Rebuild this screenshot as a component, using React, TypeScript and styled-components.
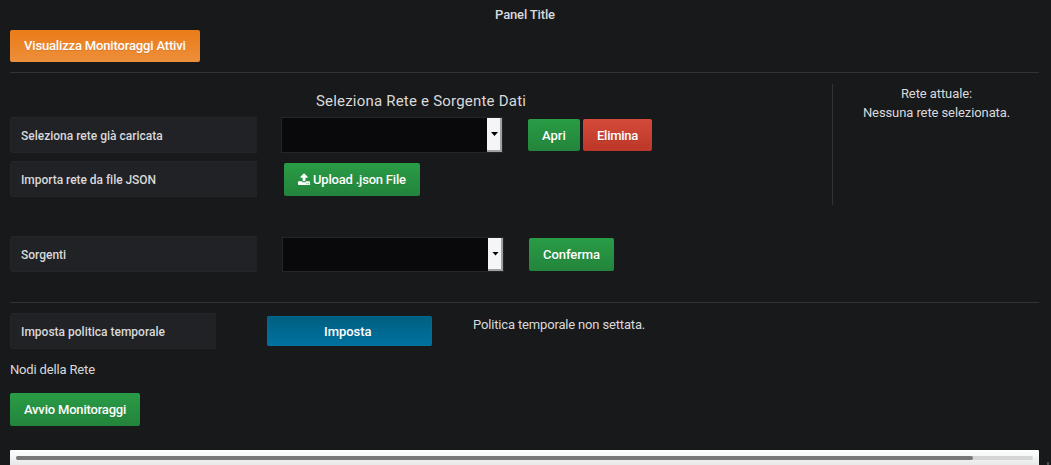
import React from 'react';
import styled, { createGlobalStyle, css } from 'styled-components';

const GlobalStyle = createGlobalStyle`
  * { box-sizing: border-box; }
  html, body { margin: 0; background: #17181a; overflow: hidden; }
  body {
    font-family: Roboto, "Liberation Sans", sans-serif;
    font-size: 13px;
    line-height: 19px;
    letter-spacing: -0.16px;
    color: #d8d9da;
  }
`;

const Panel = styled.main`
  position: relative;
  width: 1051px;
  height: 465px;
  padding: 0 12px 0 10px;
  overflow: hidden;
  display: flex;
  flex-direction: column;
  background: #18191b;
`;

const PanelTitle = styled.h1`
  margin: 0 0 0 1px;
  height: 30px;
  flex: none;
  font-size: 13px;
  font-weight: 500;
  line-height: 30px;
  text-align: center;
`;

const Divider = styled.hr`
  width: 100%;
  height: 1px;
  margin: 0;
  border: 0;
  flex: none;
  background: #333335;
`;

type Tone = 'orange' | 'green' | 'red' | 'blue';

const tones: Record<Tone, string> = {
  orange: 'linear-gradient(to bottom, #eb7b18, #ed8f3b)',
  green: 'linear-gradient(to bottom, #299c46, #23843b)',
  red: 'linear-gradient(to bottom, #d44a3a, #bc3728)',
  blue: 'linear-gradient(to bottom, #005f81, #0072a0)',
};

const Button = styled.button<{
  $tone: Tone;
  $height?: number;
  $width: number;
  $tracking?: number;
  $drop?: number;
}>`
  display: inline-flex;
  align-items: center;
  justify-content: flex-start;
  flex: none;
  height: ${({ $height = 33 }) => $height}px;
  width: ${({ $width }) => $width}px;
  padding: ${({ $drop = 0 }) => $drop}px 0 0 14px;
  border: 0;
  border-radius: 2px;
  background: ${({ $tone }) => tones[$tone]};
  color: #fff;
  font: 500 13px/20px Roboto, "Liberation Sans", sans-serif;
  letter-spacing: ${({ $tracking = -0.16 }) => $tracking}px;
  white-space: nowrap;
  text-shadow: ${({ $tone }) => ($tone === 'blue' ? 'none' : '0 1px 0 rgba(0, 0, 0, 0.1)')};
  ${({ $tone }) =>
    $tone === 'blue' &&
    css`
      padding-left: 57px;
      box-shadow: inset 0 0 0 1px rgba(0, 114, 155, 0.5);
    `}
`;

const UploadGlyph = styled.svg`
  width: 13px;
  height: 13px;
  flex: none;
  margin-right: 2px;
  fill: currentColor;
`;

const TopBar = styled.div`
  height: 42px;
  display: flex;
  align-items: flex-start;
  flex: none;
`;

const StartBar = styled(TopBar)`
  height: 33px;
`;

const Source = styled.section`
  height: 229px;
  display: flex;
  flex: none;
`;

const SourceForm = styled.div`
  width: 822px;
  padding-top: 18px;
`;

const SectionTitle = styled.h2`
  margin: 0;
  height: 26px;
  font-size: 15px;
  font-weight: 400;
  line-height: 20px;
  letter-spacing: 0.21px;
  text-align: center;
`;

const FormRow = styled.div<{ $space?: number }>`
  display: flex;
  align-items: flex-start;
  height: 36px;
  margin-bottom: ${({ $space = 0 }) => $space}px;
`;

const Label = styled.label<{ $width?: number; $tracking?: number }>`
  width: ${({ $width = 247 }) => $width}px;
  height: 36px;
  flex: none;
  padding: 0 10px;
  border: 1px solid #262628;
  border-right: 0;
  border-radius: 3px 0 0 3px;
  background: #212226;
  font-size: 12px;
  font-weight: 500;
  line-height: 36px;
  letter-spacing: ${({ $tracking = 0 }) => $tracking}px;
`;

const Control = styled.div<{ $left: number; $top?: number }>`
  display: flex;
  gap: 3px;
  margin-left: ${({ $left }) => $left}px;
  padding-top: ${({ $top = 0 }) => $top}px;
`;

const SelectBox = styled.div<{ $height: number }>`
  width: 222px;
  height: ${({ $height }) => $height}px;
  display: flex;
  justify-content: flex-end;
  border: 1px solid #262628;
  background: #09090b;
`;

const SelectArrow = styled.span`
  width: 15px;
  height: 100%;
  display: flex;
  align-items: center;
  justify-content: center;
  background: #f4f5f8;
  border: solid #a0a0a2;
  border-width: 0 2px 2px 0;

  &::before {
    content: '';
    width: 7px;
    height: 4px;
    margin-left: 2px;
    background: #000;
    clip-path: polygon(0 0, 100% 0, 50% 100%);
  }
`;

const NetworkStatus = styled.aside`
  width: 207px;
  height: 121px;
  margin-top: 11px;
  border-left: 1px solid #333335;
  letter-spacing: -0.09px;
  text-align: center;

  p { margin: 0 0 0 1px; }
`;

const Policy = styled.div`
  display: flex;
  align-items: flex-start;
  flex: none;
  height: 57px;
  padding-top: 10px;
`;

const PolicyText = styled.span`
  margin-left: 41px;
  padding-top: 2px;
`;

const NodesTitle = styled.p`
  height: 33px;
  margin: 0;
  flex: none;
`;

const ScrollTrack = styled.div`
  flex: none;
  height: 15px;
  margin-top: 24px;
  padding: 6px;
  border-radius: 1px 1px 0 0;
  background: linear-gradient(to bottom, #fff, #e6e9e8);
`;

const ScrollRail = styled.div`
  height: 4px;
  border-radius: 2px;
  background: #d5d5d5;
`;

const ScrollThumb = styled.div`
  width: 957px;
  height: 4px;
  border-radius: 2px;
  background: #777;
`;

const ResizeHandle = styled.i`
  position: absolute;
  right: 2px;
  bottom: 0;
  width: 2px;
  height: 3px;
  background: #515254;
`;

const UploadIcon = () => (
  <UploadGlyph viewBox="64 0 1792 1792" aria-hidden="true">
    <path d="M1344 1472q0-26-19-45t-45-19-45 19-19 45 19 45 45 19 45-19 19-45zm256 0q0-26-19-45t-45-19-45 19-19 45 19 45 45 19 45-19 19-45zm128-224v320q0 40-28 68t-68 28h-1472q-40 0-68-28t-28-68v-320q0-40 28-68t68-28h427q21 56 70.5 92t110.5 36h256q61 0 110.5-36t70.5-92h427q40 0 68 28t28 68zm-325-648q-17 40-59 40h-256v448q0 26-19 45t-45 19h-256q-26 0-45-19t-19-45v-448h-256q-42 0-59-40-17-39 14-69l448-448q18-19 45-19t45 19l448 448q31 30 14 69z" />
  </UploadGlyph>
);

const Select = ({ height }: { height: number }) => (
  <SelectBox $height={height} role="listbox">
    <SelectArrow />
  </SelectBox>
);

export default function App() {
  return (
    <>
      <GlobalStyle />
      <Panel>
        <PanelTitle>Panel Title</PanelTitle>
        <TopBar>
          <Button $tone="orange" $height={32} $width={190}>Visualizza Monitoraggi Attivi</Button>
        </TopBar>
        <Divider />
        <Source>
          <SourceForm>
            <SectionTitle>Seleziona Rete e Sorgente Dati</SectionTitle>
            <FormRow $space={8}>
              <Label>Seleziona rete già caricata</Label>
              <Control $left={24}>
                <Select height={36} />
              </Control>
              <Control $left={25} $top={2}>
                <Button $tone="green" $height={32} $width={52} $tracking={0} $drop={2}>Apri</Button>
                <Button $tone="red" $height={32} $width={69} $tracking={-0.25} $drop={2}>Elimina</Button>
              </Control>
            </FormRow>
            <FormRow $space={39}>
              <Label $tracking={-0.04}>Importa rete da file JSON</Label>
              <Control $left={27} $top={2}>
                <Button $tone="green" $width={136} $tracking={-0.2}>
                  <UploadIcon />
                  Upload .json File
                </Button>
              </Control>
            </FormRow>
            <FormRow>
              <Label>Sorgenti</Label>
              <Control $left={25} $top={1}>
                <Select height={35} />
              </Control>
              <Control $left={25} $top={2}>
                <Button $tone="green" $width={85} $tracking={-0.05}>Conferma</Button>
              </Control>
            </FormRow>
          </SourceForm>
          <NetworkStatus>
            <p>Rete attuale:</p>
            <p>Nessuna rete selezionata.</p>
          </NetworkStatus>
        </Source>
        <Divider />
        <Policy>
          <Label $width={206}>Imposta politica temporale</Label>
          <Control $left={51} $top={3}>
            <Button $tone="blue" $height={30} $width={165} $tracking={-0.05} $drop={2}>Imposta</Button>
          </Control>
          <PolicyText>Politica temporale non settata.</PolicyText>
        </Policy>
        <NodesTitle>Nodi della Rete</NodesTitle>
        <StartBar>
          <Button $tone="green" $width={130} $tracking={-0.19}>Avvio Monitoraggi</Button>
        </StartBar>
        <ScrollTrack>
          <ScrollRail>
            <ScrollThumb />
          </ScrollRail>
        </ScrollTrack>
        <ResizeHandle />
      </Panel>
    </>
  );
}
